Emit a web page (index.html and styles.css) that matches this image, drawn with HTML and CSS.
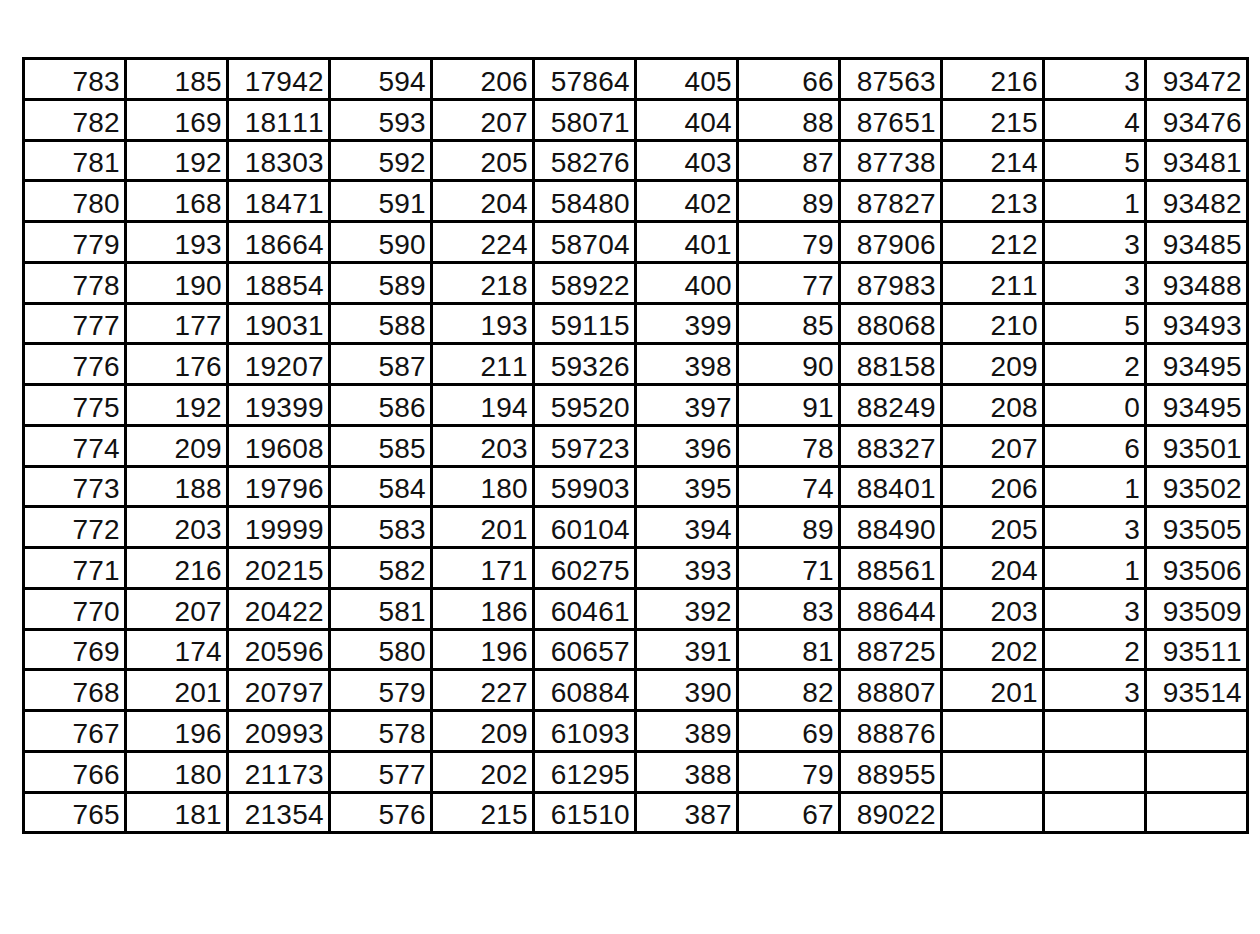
FILE: index.html
```html
<!DOCTYPE html>
<html>
<head>
<meta charset="utf-8">
<link rel="stylesheet" href="styles.css">
</head>
<body>
<table class="grid">
<tbody>
<tr><td>783</td><td>185</td><td>17942</td><td>594</td><td>206</td><td>57864</td><td>405</td><td>66</td><td>87563</td><td>216</td><td>3</td><td>93472</td></tr>
<tr><td>782</td><td>169</td><td>18111</td><td>593</td><td>207</td><td>58071</td><td>404</td><td>88</td><td>87651</td><td>215</td><td>4</td><td>93476</td></tr>
<tr><td>781</td><td>192</td><td>18303</td><td>592</td><td>205</td><td>58276</td><td>403</td><td>87</td><td>87738</td><td>214</td><td>5</td><td>93481</td></tr>
<tr><td>780</td><td>168</td><td>18471</td><td>591</td><td>204</td><td>58480</td><td>402</td><td>89</td><td>87827</td><td>213</td><td>1</td><td>93482</td></tr>
<tr><td>779</td><td>193</td><td>18664</td><td>590</td><td>224</td><td>58704</td><td>401</td><td>79</td><td>87906</td><td>212</td><td>3</td><td>93485</td></tr>
<tr><td>778</td><td>190</td><td>18854</td><td>589</td><td>218</td><td>58922</td><td>400</td><td>77</td><td>87983</td><td>211</td><td>3</td><td>93488</td></tr>
<tr><td>777</td><td>177</td><td>19031</td><td>588</td><td>193</td><td>59115</td><td>399</td><td>85</td><td>88068</td><td>210</td><td>5</td><td>93493</td></tr>
<tr><td>776</td><td>176</td><td>19207</td><td>587</td><td>211</td><td>59326</td><td>398</td><td>90</td><td>88158</td><td>209</td><td>2</td><td>93495</td></tr>
<tr><td>775</td><td>192</td><td>19399</td><td>586</td><td>194</td><td>59520</td><td>397</td><td>91</td><td>88249</td><td>208</td><td>0</td><td>93495</td></tr>
<tr><td>774</td><td>209</td><td>19608</td><td>585</td><td>203</td><td>59723</td><td>396</td><td>78</td><td>88327</td><td>207</td><td>6</td><td>93501</td></tr>
<tr><td>773</td><td>188</td><td>19796</td><td>584</td><td>180</td><td>59903</td><td>395</td><td>74</td><td>88401</td><td>206</td><td>1</td><td>93502</td></tr>
<tr><td>772</td><td>203</td><td>19999</td><td>583</td><td>201</td><td>60104</td><td>394</td><td>89</td><td>88490</td><td>205</td><td>3</td><td>93505</td></tr>
<tr><td>771</td><td>216</td><td>20215</td><td>582</td><td>171</td><td>60275</td><td>393</td><td>71</td><td>88561</td><td>204</td><td>1</td><td>93506</td></tr>
<tr><td>770</td><td>207</td><td>20422</td><td>581</td><td>186</td><td>60461</td><td>392</td><td>83</td><td>88644</td><td>203</td><td>3</td><td>93509</td></tr>
<tr><td>769</td><td>174</td><td>20596</td><td>580</td><td>196</td><td>60657</td><td>391</td><td>81</td><td>88725</td><td>202</td><td>2</td><td>93511</td></tr>
<tr><td>768</td><td>201</td><td>20797</td><td>579</td><td>227</td><td>60884</td><td>390</td><td>82</td><td>88807</td><td>201</td><td>3</td><td>93514</td></tr>
<tr><td>767</td><td>196</td><td>20993</td><td>578</td><td>209</td><td>61093</td><td>389</td><td>69</td><td>88876</td><td></td><td></td><td></td></tr>
<tr><td>766</td><td>180</td><td>21173</td><td>577</td><td>202</td><td>61295</td><td>388</td><td>79</td><td>88955</td><td></td><td></td><td></td></tr>
<tr><td>765</td><td>181</td><td>21354</td><td>576</td><td>215</td><td>61510</td><td>387</td><td>67</td><td>89022</td><td></td><td></td><td></td></tr>
</tbody>
</table>
</body>
</html>
```

FILE: styles.css
```css
html, body {
  margin: 0;
  padding: 0;
  background: #ffffff;
}

body {
  padding: 57px 0 0 22px;
  font-family: "Liberation Sans", Arial, sans-serif;
  color: #111111;
}

.grid {
  border-collapse: separate;
  border-spacing: 0;
  table-layout: fixed;
  border-top: 3px solid #000;
  border-left: 3px solid #000;
}

.grid td {
  box-sizing: border-box;
  width: 102px;
  height: 40.75px;
  padding: 0 4px 2px 0;
  border-right: 3px solid #000;
  border-bottom: 3px solid #000;
  text-align: right;
  vertical-align: bottom;
  font-size: 28px;
  line-height: 28px;
  letter-spacing: 0.3px;
  font-kerning: none;
  font-variant-numeric: tabular-nums;
  white-space: nowrap;
  overflow: hidden;
}
```
